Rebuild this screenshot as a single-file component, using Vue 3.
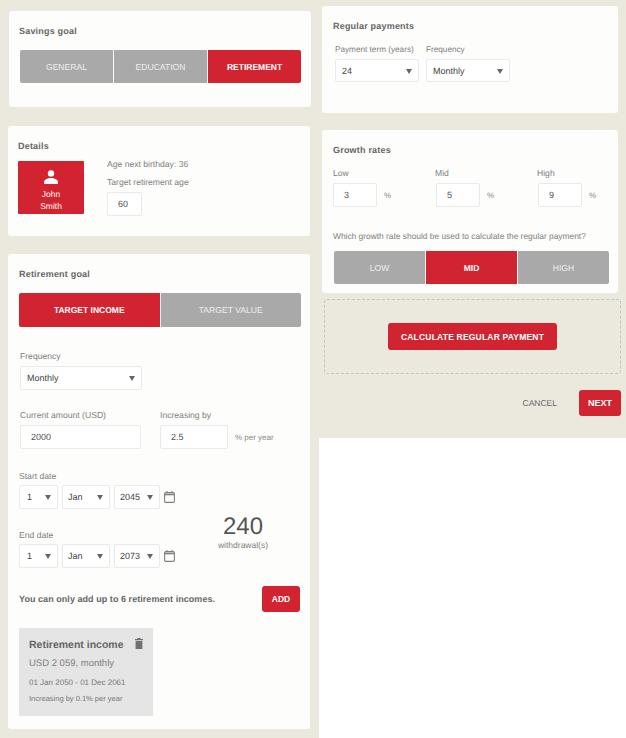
<script setup>
const goals = [
  { label: 'GENERAL' },
  { label: 'EDUCATION' },
  { label: 'RETIREMENT', active: true },
]
const targets = [
  { label: 'TARGET INCOME', active: true },
  { label: 'TARGET VALUE' },
]
const rates = [
  { label: 'Low', value: 3 },
  { label: 'Mid', value: 5 },
  { label: 'High', value: 9 },
]
const rateOptions = [
  { label: 'LOW' },
  { label: 'MID', active: true },
  { label: 'HIGH' },
]
const dates = [
  { label: 'Start date', year: 2045 },
  { label: 'End date', year: 2073 },
]
</script>

<template>
  <div class="page">
    <div class="col left">
      <section class="card goal-card">
        <h2 class="title">Savings goal</h2>
        <div class="seg">
          <div v-for="g in goals" :key="g.label" class="seg-item" :class="{ active: g.active }">{{ g.label }}</div>
        </div>
      </section>

      <section class="card details-card">
        <h2 class="title">Details</h2>
        <div class="details">
          <div class="person">
            <svg width="14" height="14" viewBox="0 0 14 14">
              <circle cx="7" cy="3.4" r="3.2" fill="#fff" />
              <path d="M0 14v-1.800C0 9.600 3.800 8 7 8s7 1.600 7 4.200V14z" fill="#fff" />
            </svg>
            <div class="person-name">John<br />Smith</div>
          </div>
          <div class="age">
            <div class="label age-next">Age next birthday: 36</div>
            <div class="label">Target retirement age</div>
            <div class="input age-input">60</div>
          </div>
        </div>
      </section>

      <section class="card retire-card">
        <h2 class="title">Retirement goal</h2>
        <div class="seg target-seg">
          <div v-for="t in targets" :key="t.label" class="seg-item" :class="{ active: t.active }">{{ t.label }}</div>
        </div>

        <div class="label freq-label">Frequency</div>
        <div class="select freq-select">Monthly<i class="caret"></i></div>

        <div class="amount-row">
          <div>
            <div class="label">Current amount (USD)</div>
            <div class="input amount-input">2000</div>
          </div>
          <div>
            <div class="label">Increasing by</div>
            <div class="inc-row">
              <div class="input inc-input">2.5</div>
              <span class="unit">% per year</span>
            </div>
          </div>
        </div>

        <div class="dates-row">
          <div class="dates">
            <div v-for="d in dates" :key="d.label" class="date-block">
              <div class="label date-label">{{ d.label }}</div>
              <div class="date-fields">
                <div class="select day">1<i class="caret"></i></div>
                <div class="select month">Jan<i class="caret"></i></div>
                <div class="select year">{{ d.year }}<i class="caret"></i></div>
                <svg class="cal" width="11" height="12" viewBox="0 0 11 12" fill="none">
                  <rect x="0.6" y="1.6" width="9.8" height="9.8" rx="1.2" stroke="#808080" stroke-width="1.1" />
                  <path d="M.6 3.500h9.800" stroke="#808080" stroke-width="1.6" />
                  <path d="M3 0v2M8 0v2" stroke="#808080" stroke-width="1.1" />
                </svg>
              </div>
            </div>
          </div>
          <div class="withdrawals">
            <div class="count">240</div>
            <div class="count-label">withdrawal(s)</div>
          </div>
        </div>

        <div class="add-row">
          <span class="limit">You can only add up to 6 retirement incomes.</span>
          <button class="btn add-btn">ADD</button>
        </div>

        <div class="income">
          <div class="income-head">
            <span class="income-title">Retirement income</span>
            <svg width="8" height="11" viewBox="0 0 8 11">
              <path d="M2.600 0h2.800l.4 1H8v1.300H0V1h2.200zM.6 3h6.800v8H.6z" fill="#707070" />
            </svg>
          </div>
          <div class="income-amount">USD 2 059, monthly</div>
          <div class="income-range">01 Jan 2050 - 01 Dec 2061</div>
          <div class="income-inc">Increasing by 0.1% per year</div>
        </div>
      </section>
    </div>

    <div class="col right">
      <section class="card payments-card">
        <h2 class="title">Regular payments</h2>
        <div class="payment-fields">
          <div class="term-field">
            <div class="label">Payment term (years)</div>
            <div class="select term-select">24<i class="caret"></i></div>
          </div>
          <div class="term-field">
            <div class="label">Frequency</div>
            <div class="select term-select">Monthly<i class="caret"></i></div>
          </div>
        </div>
      </section>

      <section class="card growth-card">
        <h2 class="title">Growth rates</h2>
        <div class="rates">
          <div v-for="r in rates" :key="r.label" class="rate">
            <div class="label">{{ r.label }}</div>
            <div class="rate-row">
              <div class="input rate-input">{{ r.value }}</div>
              <span class="unit">%</span>
            </div>
          </div>
        </div>
        <div class="label question">Which growth rate should be used to calculate the regular payment?</div>
        <div class="seg rate-seg">
          <div v-for="o in rateOptions" :key="o.label" class="seg-item" :class="{ active: o.active }">{{ o.label }}</div>
        </div>
      </section>

      <div class="calc-box">
        <button class="btn calc-btn">CALCULATE REGULAR PAYMENT</button>
      </div>

      <div class="actions">
        <span class="cancel">CANCEL</span>
        <button class="btn next-btn">NEXT</button>
      </div>
    </div>
  </div>
</template>

<style scoped>
.page {
  width: 626px;
  height: 738px;
  display: flex;
  align-items: flex-start;
  background: #fff;
  font-family: "Liberation Sans", Arial, sans-serif;
  color: #777;
  overflow: hidden;
  text-rendering: geometricPrecision;
}
.col { background: #ebe8de; box-sizing: border-box; }
.left { width: 319px; height: 738px; padding: 11px 0 0 8px; }
.right { width: 307px; height: 438px; padding: 6px 0 0 3px; }

.card {
  background: #fdfdfb;
  border-radius: 3px;
  box-sizing: border-box;
  width: 302px;
}
.title {
  margin: 0;
  font-size: 9px;
  line-height: 12px;
  font-weight: bold;
  color: #666;
  letter-spacing: 0.2px;
}
.label {
  font-size: 8.6px;
  line-height: 12px;
  color: #808080;
}

.seg { display: flex; gap: 1px; height: 33px; border-radius: 2px; overflow: hidden; }
.seg-item {
  flex: 1;
  display: flex;
  align-items: center;
  justify-content: center;
  background: #a9a9a9;
  color: #eee;
  font-size: 8.6px;
}
.seg-item.active { background: #d22430; color: #fff; font-weight: bold; font-size: 8.5px; }

.input, .select {
  box-sizing: border-box;
  background: #fff;
  border: 1px solid #eaeaea;
  border-radius: 2px;
  font-size: 9px;
  color: #555;
  display: flex;
  align-items: center;
}
.select { position: relative; padding-left: 6px; color: #444; }
.caret {
  position: absolute;
  right: 6px;
  top: 50%;
  margin-top: -2px;
  border-left: 3.5px solid transparent;
  border-right: 3.5px solid transparent;
  border-top: 5px solid #666;
}
.unit { font-size: 8px; color: #888; }

.goal-card { height: 96px; margin-left: 1px; padding: 14px 10px 0; }
.goal-card .title { margin-bottom: 13px; }
.goal-card .seg { width: 281px; margin-left: 1px; }

.details-card { height: 110px; margin-top: 19px; padding: 14px 10px 0; }
.details { display: flex; gap: 23px; margin-top: 9px; }
.person {
  width: 66px;
  height: 53px;
  background: #d22430;
  border-radius: 1px;
  color: #fff;
  font-size: 8.5px;
  line-height: 12px;
  text-align: center;
  padding-top: 9px;
  box-sizing: border-box;
}
.person svg { display: block; margin: 0 auto 4px; }
.age-next { margin: -3px 0 6px; }
.age-input { width: 35px; height: 24px; margin-top: 4px; padding-left: 10px; }

.retire-card { height: 475px; margin-top: 18px; padding: 14px 11px 0; }
.target-seg { width: 282px; height: 34px; margin-top: 13px; }
.freq-label { margin: 23px 0 0 1px; }
.freq-select { width: 122px; height: 24px; margin: 4px 0 0 1px; }
.amount-row { display: flex; gap: 19px; margin: 19px 0 0 1px; }
.amount-input { width: 121px; height: 24px; margin-top: 4px; padding-left: 10px; }
.inc-row { display: flex; align-items: center; gap: 7px; margin-top: 4px; }
.inc-input { width: 68px; height: 24px; padding-left: 10px; }

.dates-row { display: flex; margin-top: 21px; }
.dates { width: 165px; flex: none; }
.date-block + .date-block { margin-top: 20px; }
.date-fields { display: flex; align-items: center; gap: 4px; margin-top: 3px; }
.day { width: 39px; height: 24px; padding-left: 7px; }
.month { width: 48px; height: 24px; padding-left: 5px; }
.year { width: 46px; height: 24px; padding-left: 5px; }
.withdrawals { width: 118px; flex: none; text-align: center; padding-top: 44px; }
.count { font-size: 24px; line-height: 26px; color: #555; }
.count-label { font-size: 8.5px; line-height: 10px; color: #808080; }

.btn {
  border: 0;
  background: #d22430;
  color: #fff;
  font-family: inherit;
  font-weight: bold;
  border-radius: 3px;
  padding: 0;
}
.add-row { display: flex; align-items: center; justify-content: space-between; margin-top: 18px; }
.limit { font-size: 9px; font-weight: bold; color: #666; letter-spacing: 0.05px; }
.add-btn { width: 38px; height: 26px; font-size: 8.5px; margin-right: -1px; }

.income {
  width: 134px;
  height: 88px;
  margin-top: 16px;
  box-sizing: border-box;
  background: #e5e5e5;
  padding: 10px 10px 0 10px;
}
.income-head { display: flex; justify-content: space-between; align-items: flex-start; height: 14px; }
.income-title { font-size: 10.5px; line-height: 14px; font-weight: bold; color: #666; }
.income-amount { font-size: 9.5px; line-height: 12px; color: #808080; margin-top: 6px; }
.income-range { font-size: 8px; line-height: 10px; color: #777; margin-top: 8px; }
.income-inc { font-size: 7.5px; line-height: 10px; color: #777; margin-top: 6px; }

.payments-card { width: 296px; height: 107px; padding: 14px 11px 0; }
.payment-fields { display: flex; gap: 7px; margin: 12px 0 0 2px; }
.term-field { width: 84px; }
.term-field .label { white-space: nowrap; font-size: 8.2px; }
.term-select { width: 84px; height: 23px; margin-top: 3px; }

.growth-card { width: 296px; height: 163px; margin-top: 17px; padding: 14px 11px 0; }
.rates { display: flex; margin-top: 11px; }
.rate { width: 102px; flex: none; }
.rate:nth-child(2) .rate-row, .rate:nth-child(3) .rate-row { margin-left: 1px; }
.rate-row { display: flex; align-items: center; gap: 7px; margin-top: 4px; }
.rate-input { width: 44px; height: 24px; padding-left: 10px; }
.question { margin-top: 23px; font-size: 8.4px; }
.rate-seg { width: 275px; margin: 9px 0 0 1px; }

.calc-box {
  box-sizing: border-box;
  width: 297px;
  height: 75px;
  margin: 6px 0 0 2px;
  border: 1px dashed #c4c4bd;
  border-radius: 3px;
  display: flex;
  align-items: center;
  justify-content: center;
}
.calc-btn { width: 169px; height: 27px; font-size: 8.5px; letter-spacing: 0.2px; }

.actions { display: flex; align-items: center; justify-content: flex-end; margin: 16px 5px 0 0; }
.cancel { font-size: 8.5px; color: #666; margin-right: 22px; }
.next-btn { width: 42px; height: 26px; font-size: 9px; }
</style>
